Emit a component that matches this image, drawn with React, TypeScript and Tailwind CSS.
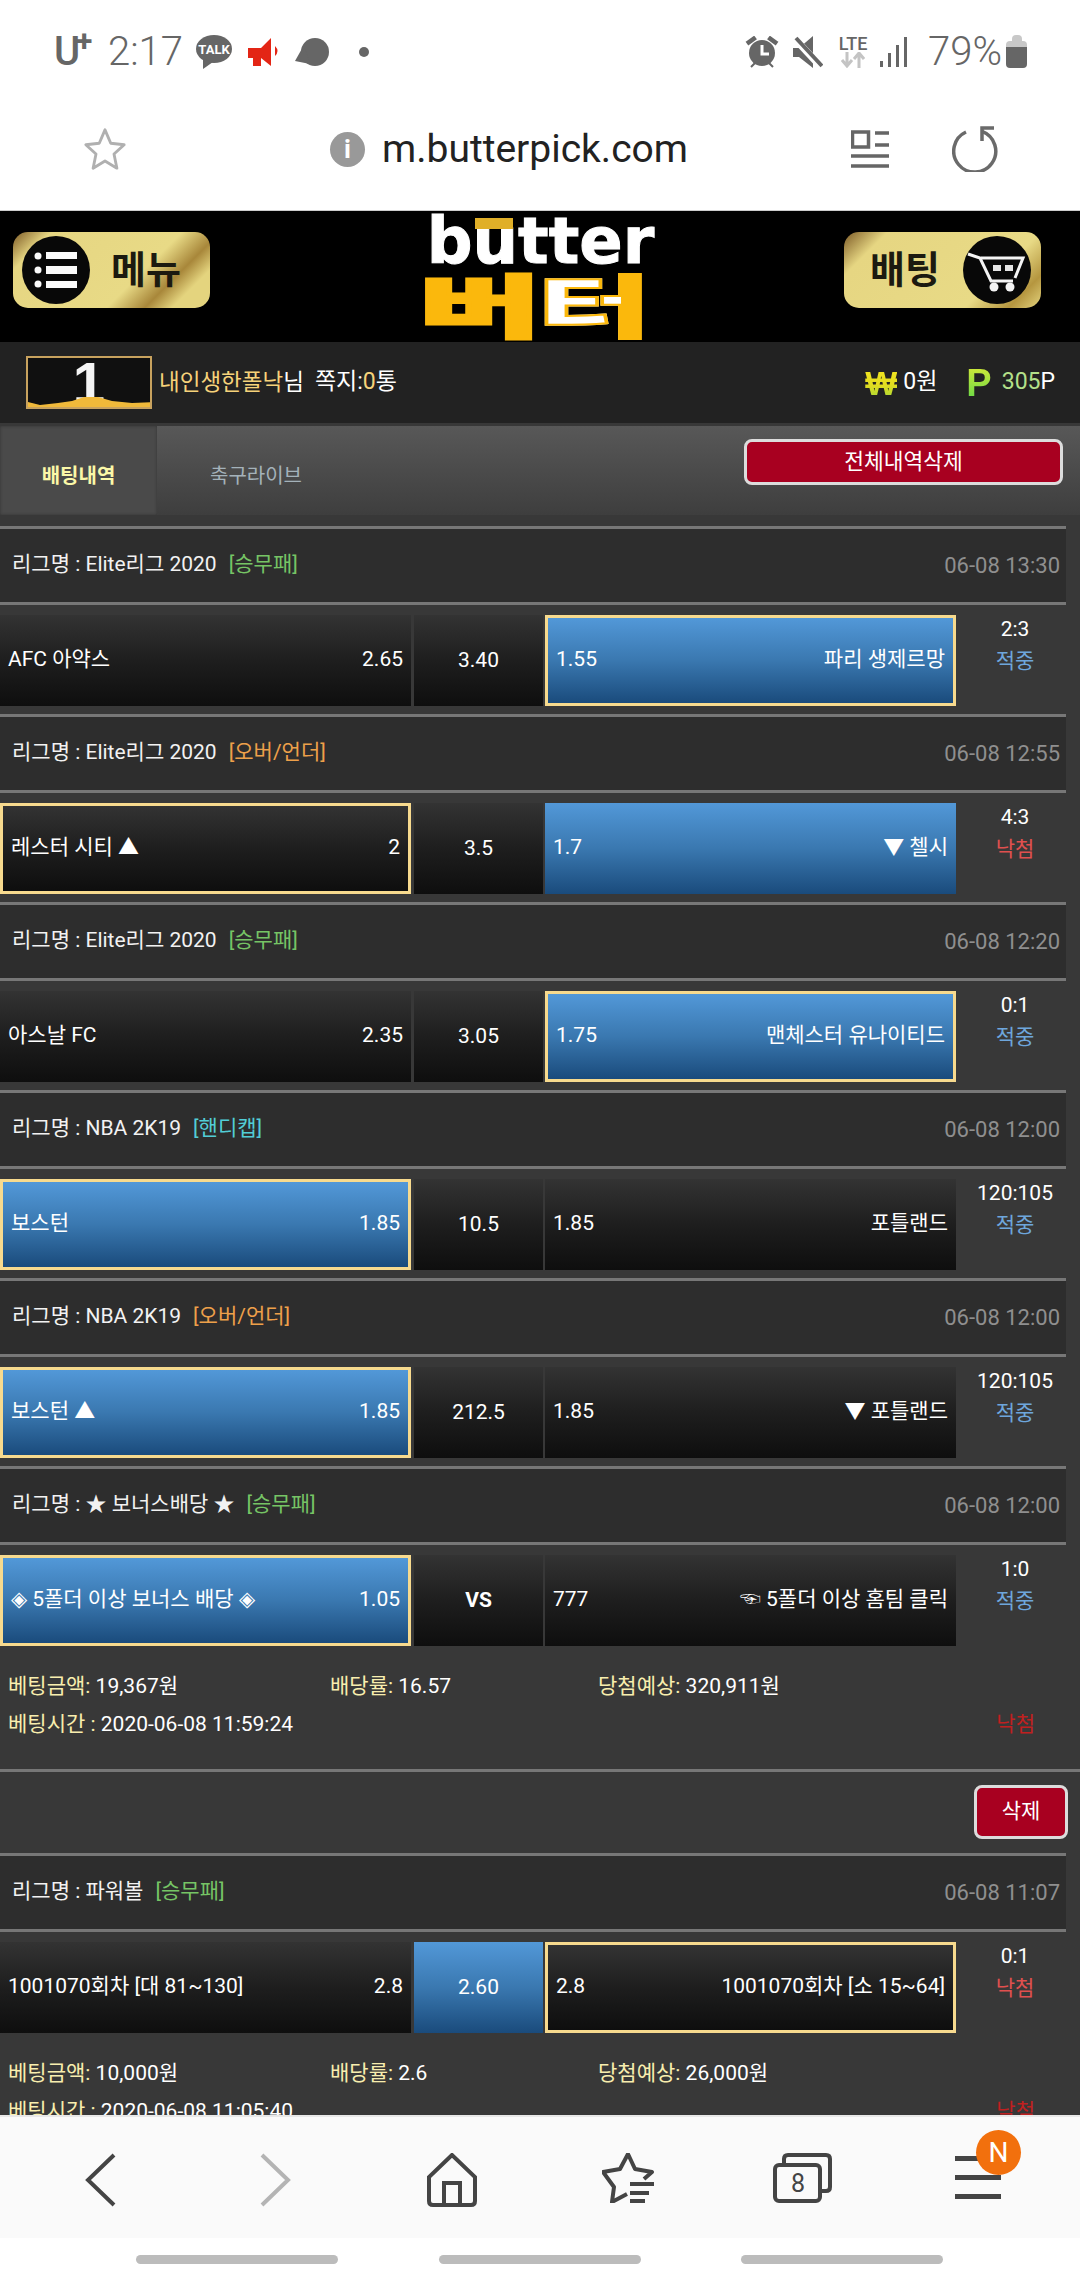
import * as React from "react"

type Side = { name: React.ReactNode; odds: string; blue?: boolean; picked?: boolean }
type Game = {
  league: string
  tag: string
  tagClass: string
  time: string
  left: Side
  mid: string
  midBlue?: boolean
  midBold?: boolean
  right: Side
  score: string
  win: boolean
}

const GREEN = "text-[#76c465]"
const ORANGE = "text-[#eda04a]"
const CYAN = "text-[#52cdd6]"

const firstSlip: Game[] = [
  {
    league: "리그명 : Elite리그 2020",
    tag: "[승무패]",
    tagClass: GREEN,
    time: "06-08 13:30",
    left: { name: "AFC 아약스", odds: "2.65" },
    mid: "3.40",
    right: { name: "파리 생제르망", odds: "1.55", blue: true, picked: true },
    score: "2:3",
    win: true,
  },
  {
    league: "리그명 : Elite리그 2020",
    tag: "[오버/언더]",
    tagClass: ORANGE,
    time: "06-08 12:55",
    left: { name: "레스터 시티 ▲", odds: "2", picked: true },
    mid: "3.5",
    right: { name: "▼ 첼시", odds: "1.7", blue: true },
    score: "4:3",
    win: false,
  },
  {
    league: "리그명 : Elite리그 2020",
    tag: "[승무패]",
    tagClass: GREEN,
    time: "06-08 12:20",
    left: { name: "아스날 FC", odds: "2.35" },
    mid: "3.05",
    right: { name: "맨체스터 유나이티드", odds: "1.75", blue: true, picked: true },
    score: "0:1",
    win: true,
  },
  {
    league: "리그명 : NBA 2K19",
    tag: "[핸디캡]",
    tagClass: CYAN,
    time: "06-08 12:00",
    left: { name: "보스턴", odds: "1.85", blue: true, picked: true },
    mid: "10.5",
    right: { name: "포틀랜드", odds: "1.85" },
    score: "120:105",
    win: true,
  },
  {
    league: "리그명 : NBA 2K19",
    tag: "[오버/언더]",
    tagClass: ORANGE,
    time: "06-08 12:00",
    left: { name: "보스턴 ▲", odds: "1.85", blue: true, picked: true },
    mid: "212.5",
    right: { name: "▼ 포틀랜드", odds: "1.85" },
    score: "120:105",
    win: true,
  },
  {
    league: "리그명 : ★ 보너스배당 ★",
    tag: "[승무패]",
    tagClass: GREEN,
    time: "06-08 12:00",
    left: { name: "◈ 5폴더 이상 보너스 배당 ◈", odds: "1.05", blue: true, picked: true },
    mid: "VS",
    midBold: true,
    right: { name: "☜ 5폴더 이상 홈팀 클릭", odds: "777" },
    score: "1:0",
    win: true,
  },
]

const powerball: Game = {
  league: "리그명 : 파워볼",
  tag: "[승무패]",
  tagClass: GREEN,
  time: "06-08 11:07",
  left: { name: "1001070회차 [대 81~130]", odds: "2.8" },
  mid: "2.60",
  midBlue: true,
  right: { name: "1001070회차 [소 15~64]", odds: "2.8", picked: true },
  score: "0:1",
  win: false,
}

const BLACK_CELL = "bg-[linear-gradient(180deg,#333333_0%,#1e1e1e_50%,#0e0e0e_100%)]"
const BLUE_CELL = "bg-[linear-gradient(180deg,#5298d8_0%,#3a78b0_50%,#1a4b7c_100%)]"

function Line({ full }: { full?: boolean }) {
  return <div className={full ? "h-[3px] w-full bg-[#777777]" : "h-[3px] w-[1066px] bg-[#777777]"} />
}

function SideCell({ side, flip }: { side: Side; flip?: boolean }) {
  return (
    <div
      className={`box-border flex h-[91px] w-[411px] items-center justify-between px-2 pb-0.5 ${
        side.blue ? BLUE_CELL : BLACK_CELL
      } ${side.picked ? "border-[3px] border-[#f7da8e]" : ""}`}
    >
      {flip ? (
        <>
          <span>{side.odds}</span>
          <span>{side.name}</span>
        </>
      ) : (
        <>
          <span>{side.name}</span>
          <span>{side.odds}</span>
        </>
      )}
    </div>
  )
}

function GameBlock({ game }: { game: Game }) {
  return (
    <div>
      <div className="flex h-[73px] w-[1066px] items-center justify-between bg-[#2d2d2d] pb-[1px] pl-3 pr-[6px]">
        <span className="flex gap-[12px] text-[#f2f2f2]">
          <span>{game.league}</span>
          <span className={game.tagClass}>{game.tag}</span>
        </span>
        <span className="text-[22px] text-[#8f8f8f]">{game.time}</span>
      </div>
      <Line />
      <div className="flex pt-[10px] pb-2 text-white">
        <SideCell side={game.left} />
        <div
          className={`ml-[3px] flex h-[91px] w-[129px] items-center justify-center ${
            game.midBlue ? BLUE_CELL : BLACK_CELL
          } ${game.midBold ? "font-bold" : ""}`}
        >
          {game.mid}
        </div>
        <div className="ml-[2px]">
          <SideCell side={game.right} flip />
        </div>
        <div className="flex w-[118px] flex-col items-center">
          <span className="h-[28px] leading-[28px]">{game.score}</span>
          <span className={`h-[36px] leading-[36px] ${game.win ? "text-[#6ea6dc]" : "text-[#e0504f]"}`}>
            {game.win ? "적중" : "낙첨"}
          </span>
        </div>
      </div>
    </div>
  )
}

function SlipInfo({ amount, rate, expected, time }: { amount: string; rate: string; expected: string; time: string }) {
  return (
    <div className="flex flex-col px-2 pt-[13px] text-white">
      <div className="flex h-[39px] items-center">
        <span className="w-[322px]">
          <span className="text-[#f8eeae]">베팅금액:</span> {amount}
        </span>
        <span className="w-[268px]">
          <span className="text-[#f8eeae]">배당률:</span> {rate}
        </span>
        <span>
          <span className="text-[#f8eeae]">당첨예상:</span> {expected}
        </span>
      </div>
      <div className="flex h-[38px] items-center justify-between">
        <span>
          <span className="text-[#f8eeae]">베팅시간 :</span> {time}
        </span>
        <span className="mr-[37px] text-[#c02020]">낙첨</span>
      </div>
    </div>
  )
}

function GoldList() {
  return (
    <svg width="68" height="68" viewBox="0 0 68 68">
      <circle cx="34" cy="34" r="34" fill="#080808" />
      <g fill="#fafafa">
        <circle cx="16" cy="20" r="3.5" />
        <circle cx="16" cy="34" r="3.5" />
        <circle cx="16" cy="48" r="3.5" />
        <rect x="24" y="16" width="31" height="7" />
        <rect x="24" y="30" width="31" height="8" />
        <rect x="24" y="45" width="31" height="7" />
      </g>
    </svg>
  )
}

function GoldCart() {
  return (
    <svg width="68" height="68" viewBox="0 0 68 68">
      <circle cx="34" cy="34" r="34" fill="#080808" />
      <g fill="none" stroke="#f4f4f4" strokeWidth="3">
        <path d="M5 18l12 4 11 23h22" />
        <path d="M18 22h42l-8 20" />
      </g>
      <rect x="30" y="29" width="8" height="6" fill="#e4e4e4" />
      <rect x="42" y="29" width="8" height="6" fill="#e4e4e4" />
      <circle cx="31" cy="51" r="4.5" fill="#f4f4f4" />
      <circle cx="47" cy="51" r="4.5" fill="#f4f4f4" />
    </svg>
  )
}

function StatusBar() {
  return (
    <div className="flex h-[103px] items-center pl-[54px] pr-[53px] text-[#666666]">
      <span className="relative w-[54px] text-[40px] font-medium leading-none">
        U<span className="absolute left-[22px] -top-[6px] text-[30px] font-bold">+</span>
      </span>
      <span className="w-[88px] text-[40px] font-light leading-none">2:17</span>
      <svg width="36" height="34" viewBox="0 0 36 34">
        <ellipse cx="18" cy="14" rx="18" ry="14" fill="#666" />
        <path d="M7 24l0 10 10-7z" fill="#666" />
        <text x="18" y="19" textAnchor="middle" fontSize="13" fontWeight="700" fill="#fff">TALK</text>
      </svg>
      <svg width="32" height="28" viewBox="0 0 32 28" className="ml-[16px]">
        <path d="M0 10h13L23 0v28L13 20v8H5v-8H0z" fill="#e32515" />
        <path d="M27 8q5 5 0 10z" fill="#e32515" />
      </svg>
      <svg width="34" height="28" viewBox="0 0 34 28" className="ml-[15px]">
        <circle cx="20" cy="14" r="14" fill="#666" />
        <path d="M0 23L9 7l6 19z" fill="#666" />
      </svg>
      <span className="ml-[30px] h-[10px] w-[10px] rounded-full bg-[#666666]" />
      <svg width="34" height="32" viewBox="0 0 34 32" className="ml-auto">
        <path d="M2 6l7-5 1.500 2-7 5zM32 6l-7-5-1.500 2 7 5zM6 31l4-4M28 31l-4-4" stroke="#666" strokeWidth="2" fill="#666" />
        <circle cx="17" cy="17" r="13" fill="#666" />
        <path d="M17 9v9h7" stroke="#fff" strokeWidth="3" fill="none" />
      </svg>
      <svg width="30" height="32" viewBox="0 0 30 32" className="ml-[14px]">
        <path d="M0 12h6L20 0v32L6 21H0z" fill="#666" />
        <path d="M2 3l26 28" stroke="#fff" strokeWidth="7" />
        <path d="M3 2l26 28" stroke="#666" strokeWidth="4" />
      </svg>
      <div className="ml-[15px] flex w-[30px] flex-col items-center">
        <span className="text-[18px] font-medium leading-[16px]">LTE</span>
        <svg width="24" height="16" viewBox="0 0 24 16">
          <path d="M6 0v12M1 8l5 6 5-6M18 16V3M13 7l5-6 5 6" stroke="#c4c4c4" strokeWidth="3" fill="none" />
        </svg>
      </div>
      <svg width="27" height="30" viewBox="0 0 27 30" className="ml-[12px]">
        <g fill="#666">
          <rect x="0" y="24" width="3" height="6" />
          <rect x="8" y="16" width="3" height="14" />
          <rect x="16" y="8" width="3" height="22" />
          <rect x="24" y="0" width="3" height="30" />
        </g>
      </svg>
      <span className="ml-[21px] text-[40px] font-light leading-none">79%</span>
      <div className="ml-[4px] flex w-[21px] flex-col items-center">
        <span className="h-[6px] w-[10px] rounded-t-sm bg-[#c8c8c8]" />
        <span className="h-[6px] w-[21px] rounded-t-sm bg-[#c8c8c8]" />
        <span className="h-[21px] w-[21px] rounded-b-sm bg-[#666666]" />
      </div>
    </div>
  )
}

function UrlBar() {
  return (
    <div className="flex h-[107px] items-center pb-[15px]">
      <svg width="46" height="46" viewBox="0 0 24 24" className="ml-[82px]" fill="none" stroke="#b0b0b0" strokeWidth="1.5" strokeLinejoin="round">
        <path d="M12 2l3 7 7 .8-5.300 4.800 1.500 7.400L12 18.300 5.800 22l1.500-7.400L2 9.800 9 9z" />
      </svg>
      <span className="ml-[202px] flex h-[35px] w-[35px] items-center justify-center rounded-full bg-[#999999] text-[26px] font-bold leading-none text-white">
        i
      </span>
      <span className="ml-[17px] text-[39px] leading-none text-[#222222]">m.butterpick.com</span>
      <svg width="38" height="38" viewBox="0 0 38 38" className="ml-[163px]" fill="none" stroke="#666" strokeWidth="3.500">
        <rect x="1.500" y="2" width="16" height="15" />
        <path d="M24 3h14M24 15h14M0 26h38M0 36h38" />
      </svg>
      <svg width="46" height="46" viewBox="0 0 46 46" className="ml-[63px]" fill="none" stroke="#6a6a6a" strokeWidth="3.500">
        <path d="M30 5.400A21 21 0 1 1 14 6" />
        <path d="M42 2H30v13" />
      </svg>
    </div>
  )
}

function Logo() {
  return (
    <div className="relative ml-[217px] mt-[7px] flex h-[124px] w-[227px] flex-col items-center">
      <span className="absolute left-[48px] top-0 h-[11px] w-[38px] bg-[#e0af28]" />
      <span className="h-[52px] font-['DejaVu_Sans',sans-serif] text-[64px] font-bold leading-[46px] text-white [-webkit-text-stroke:1px_#ffffff]">
        butter
      </span>
      <div className="flex h-[72px] w-[227px] font-['Noto_Sans_CJK_KR',sans-serif] text-[68px] font-black leading-[66px]">
        <span className="-ml-[8px] inline-block w-[68px] origin-left scale-x-[1.95] text-[#fbb80c] [-webkit-text-stroke:3px_#fbb80c]">
          버
        </span>
        <span className="ml-[50px] inline-block w-[68px] origin-left scale-x-[1.82] bg-[linear-gradient(90deg,#ffffff_0,#ffffff_68%,#fbb80c_68%)] bg-clip-text text-transparent [-webkit-text-stroke:2px_#fbb80c]">
          터
        </span>
      </div>
    </div>
  )
}

function TopHeader() {
  return (
    <div className="flex h-[131px] items-start bg-black">
      <div className="ml-[13px] mt-[21px] flex h-[76px] w-[197px] items-center rounded-[15px] bg-[linear-gradient(135deg,#7c5a26_0%,#e6d682_14%,#e8da86_62%,#a8873a_76%,#e4d47e_86%)] pl-[9px]">
        <GoldList />
        <span className="ml-[21px] text-[38px] font-bold leading-none text-[#1c1a10]">메뉴</span>
      </div>
      <Logo />
      <div className="ml-[190px] mt-[21px] flex h-[76px] w-[197px] items-center rounded-[15px] bg-[linear-gradient(135deg,#7c5a26_0%,#e6d682_16%,#e8da86_72%,#b5963f_88%,#e4d47e_100%)] pl-[26px]">
        <span className="text-[38px] font-bold leading-none text-[#1c1a10]">배팅</span>
        <span className="ml-[23px]">
          <GoldCart />
        </span>
      </div>
    </div>
  )
}

function UserBar() {
  return (
    <div className="flex h-[81px] items-center bg-[#222222] pl-[26px] pr-[25px] text-[23px] text-white">
      <div className="relative flex h-[53px] w-[126px] items-center justify-center border-2 border-[#c8a25e] bg-[#101010]">
        <span className="font-['Liberation_Sans',sans-serif] text-[58px] font-bold leading-[49px] text-[#f4f4f4]">1</span>
        <svg width="122" height="14" viewBox="0 0 122 14" className="absolute bottom-0 left-0">
          <path d="M0 9l12 3 18-2 14-2 12-4 14 0 14 4 20 2 28-1v5H0z" fill="#f0b93a" />
        </svg>
      </div>
      <span className="ml-[7px] text-[22.500px] text-[#f6d27a]">내인생한폴낙</span>
      <span className="text-[22.500px]">님</span>
      <span className="ml-[11px]">쪽지:</span>
      <span className="text-[#f6d27a]">0</span>
      <span>통</span>
      <span className="ml-auto bg-[linear-gradient(180deg,#f6e820_0%,#e2dc20_55%,#a4d838_100%)] bg-clip-text font-['Liberation_Sans',sans-serif] text-[34px] font-bold leading-none text-transparent">
        ₩
      </span>
      <span className="ml-[6px]">0원</span>
      <span className="ml-[29px] bg-[linear-gradient(180deg,#d8e838_0%,#60d848_100%)] bg-clip-text font-['Liberation_Sans',sans-serif] text-[38px] font-bold leading-none text-transparent">
        P
      </span>
      <span className="ml-[10px] text-[#b4e08a]">305</span>
      <span>P</span>
    </div>
  )
}

function Tabs() {
  return (
    <div className="relative mt-[3px] flex h-[89px] bg-[linear-gradient(180deg,#585858_0%,#3e3e3e_100%)]">
      <div className="flex w-[157px] items-center justify-center bg-[#4a4a4a] pt-[10px] text-[20px] font-bold text-[#fbf8a8] shadow-[inset_0_0_3px_#333]">
        배팅내역
      </div>
      <div className="ml-[53px] flex items-center pt-[10px] text-[20px] text-[#a4b2ba]">축구라이브</div>
      <button className="ml-auto mr-[17px] mt-[13px] h-[46px] w-[319px] rounded-lg border-[3px] border-[#dcdcdc] bg-[#a80020] text-[21.500px] text-white">
        전체내역삭제
      </button>
    </div>
  )
}

function BottomNav() {
  return (
    <div className="flex-none border-t-2 border-[#e8e8e8] bg-white">
      <div className="relative flex h-[121px] items-start bg-[#fafafa] pt-[36px]">
        <svg width="32" height="54" viewBox="0 0 32 54" className="ml-[85px]" fill="none" stroke="#444" strokeWidth="4">
          <path d="M29 2L3 27l26 25" />
        </svg>
        <svg width="32" height="54" viewBox="0 0 32 54" className="ml-[142px]" fill="none" stroke="#b4b4b4" strokeWidth="4">
          <path d="M3 2l26 25L3 52" />
        </svg>
        <svg width="52" height="54" viewBox="0 0 52 54" className="ml-[135px]" fill="none" stroke="#444" strokeWidth="4">
          <path d="M26 2L3 24v24q0 4 4 4h38q4 0 4-4V24z" />
          <path d="M18 52V30h16v22" />
        </svg>
        <svg width="52" height="50" viewBox="0 0 52 50" className="ml-[124px]" fill="none" stroke="#444" strokeWidth="4" strokeLinejoin="round">
          <path d="M42 26l8-7-17-3-7-15-8 15-17 3 11 15-2 15 15-8" />
          <path d="M28 31h24M28 40h19M28 48h15" />
        </svg>
        <svg width="59" height="50" viewBox="0 0 59 50" className="ml-[119px]" fill="none" stroke="#444" strokeWidth="4" strokeLinejoin="round">
          <path d="M11 11V6q0-4 4-4h38q4 0 4 4v28q0 4-4 4h-5" />
          <rect x="2" y="12" width="45" height="36" rx="4" />
          <text x="25" y="39" textAnchor="middle" fontSize="25" fill="#444" stroke="none">8</text>
        </svg>
        <div className="ml-[123px] mt-[3px] flex w-[46px] flex-col gap-[14px]">
          <span className="h-[5px] bg-[#444444]" />
          <span className="h-[5px] bg-[#444444]" />
          <span className="h-[5px] bg-[#444444]" />
        </div>
        <span className="absolute left-[976px] top-[13px] flex h-[45px] w-[45px] items-center justify-center rounded-full bg-[#f2700d] text-[28px] leading-none text-white">
          N
        </span>
      </div>
      <div className="flex h-[42px] items-center gap-[100.500px] pl-[136px] pt-[1px]">
        <span className="h-[9px] w-[202px] rounded-full bg-[#bcbcbc]" />
        <span className="h-[9px] w-[202px] rounded-full bg-[#bcbcbc]" />
        <span className="h-[9px] w-[202px] rounded-full bg-[#bcbcbc]" />
      </div>
    </div>
  )
}

export default function App() {
  return (
    <div className="flex h-[2280px] w-[1080px] flex-col overflow-hidden bg-white font-['Roboto','Noto_Sans_CJK_KR',sans-serif] text-[21px]">
      <div className="h-[211px] flex-none border-b border-[#cccccc]">
        <StatusBar />
        <UrlBar />
      </div>
      <div className="min-h-0 flex-1 overflow-hidden bg-[#383838]">
        <TopHeader />
        <UserBar />
        <Tabs />
        <div className="h-[11px]" />
        <Line />
        {firstSlip.map((game, i) => (
          <div key={i}>
            <GameBlock game={game} />
            {i < firstSlip.length - 1 && <Line />}
          </div>
        ))}
        <SlipInfo amount="19,367원" rate="16.57" expected="320,911원" time="2020-06-08 11:59:24" />
        <div className="h-[25px]" />
        <Line full />
        <div className="flex h-[81px] justify-end pr-[12px] pt-[13px]">
          <button className="h-[54px] w-[94px] rounded-lg border-[3px] border-[#dcdcdc] bg-[#a80020] text-white">삭제</button>
        </div>
        <Line />
        <GameBlock game={powerball} />
        <SlipInfo amount="10,000원" rate="2.6" expected="26,000원" time="2020-06-08 11:05:40" />
      </div>
      <BottomNav />
    </div>
  )
}
